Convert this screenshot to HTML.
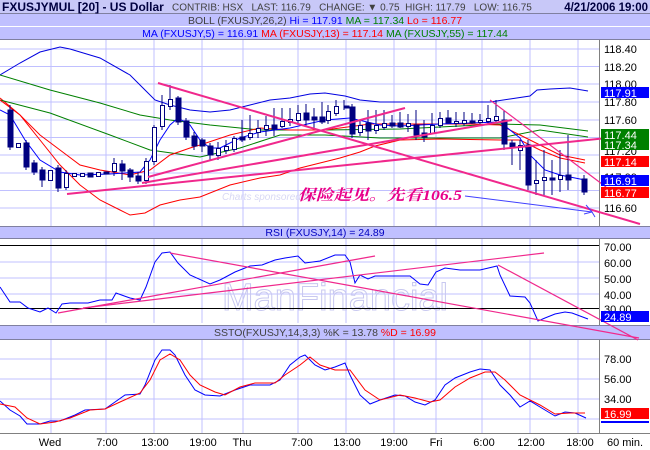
<!DOCTYPE html>
<html><head><meta charset="utf-8"><style>
html,body{margin:0;padding:0;background:#fff;width:650px;height:450px;overflow:hidden}
svg{display:block;font-family:"Liberation Sans",Arial,sans-serif}
</style></head><body>
<svg width="650" height="450" viewBox="0 0 650 450" xmlns="http://www.w3.org/2000/svg">
<rect width="650" height="450" fill="#fff"/>
<rect x="0" y="0" width="650" height="13" fill="#c8c8f8"/>
<rect x="0" y="14" width="650" height="12" fill="#c0c0ff"/>
<rect x="0" y="27" width="650" height="12" fill="#c0c0ff"/>
<line x1="0" y1="13.5" x2="650" y2="13.5" stroke="#8080a0"/>
<line x1="0" y1="26.5" x2="650" y2="26.5" stroke="#fff"/>
<line x1="0" y1="39.5" x2="650" y2="39.5" stroke="#8080a0"/>
<text x="2" y="11" font-size="12" font-weight="bold" fill="#000040">FXUSJYMUL [20] - US Dollar</text>
<text x="172" y="10.5" font-size="10" fill="#404040">CONTRIB: HSX&#160;&#160; LAST: 116.79&#160;&#160; CHANGE: &#9660; 0.75&#160; HIGH: 117.79&#160;&#160; LOW: 116.75</text>
<text x="648" y="11" font-size="11.5" font-weight="bold" fill="#000040" text-anchor="end">4/21/2006 19:00</text>
<text x="325" y="24" font-size="10.5" text-anchor="middle"><tspan fill="#404040">BOLL (FXUSJY,26,2) </tspan><tspan fill="#0000ff">Hi = 117.91 </tspan><tspan fill="#008000">MA = 117.34 </tspan><tspan fill="#ff0000">Lo = 116.77</tspan></text>
<text x="325" y="37" font-size="10.5" text-anchor="middle"><tspan fill="#0000ff">MA (FXUSJY,5) = 116.91 </tspan><tspan fill="#ff0000">MA (FXUSJY,13) = 117.14 </tspan><tspan fill="#008000">MA (FXUSJY,55) = 117.44</tspan></text>

<g stroke="#c0c0ff" stroke-width="1">
<path d="M51 40V226M106 40V226M154 40V226M202 40V226M243 40V226M298 40V226M346 40V226M394 40V226M436 40V226M482 40V226M530 40V226M578 40V226"/>
<path d="M0 49H599M0 66.5H599M0 84H599M0 102H599M0 120H599M0 137.5H599M0 155H599M0 173H599M0 190.5H599M0 208H599"/>
<path d="M51 239V323M106 239V323M154 239V323M202 239V323M243 239V323M298 239V323M346 239V323M394 239V323M436 239V323M482 239V323M530 239V323M578 239V323"/>
<path d="M0 262H599M0 278H599M0 294H599"/>
<path d="M51 340V433M106 340V433M154 340V433M202 340V433M243 340V433M298 340V433M346 340V433M394 340V433M436 340V433M482 340V433M530 340V433M578 340V433"/>
<path d="M0 359H599M0 379H599M0 399H599M0 419H599"/>
</g>
<line x1="599.5" y1="40" x2="599.5" y2="433" stroke="#808080"/>
<rect x="0" y="227" width="650" height="11" fill="#c0c0ff"/>
<line x1="0" y1="226.5" x2="650" y2="226.5" stroke="#8080a0"/>
<line x1="0" y1="238.5" x2="650" y2="238.5" stroke="#8080a0"/>
<text x="325" y="236" font-size="10.5" text-anchor="middle" fill="#0000c0">RSI (FXUSJY,14) = 24.89</text>
<rect x="0" y="326" width="650" height="13" fill="#c0c0ff"/>
<line x1="0" y1="325.5" x2="650" y2="325.5" stroke="#8080a0"/>
<line x1="0" y1="339.5" x2="650" y2="339.5" stroke="#8080a0"/>
<text x="325" y="336" font-size="10.5" text-anchor="middle"><tspan fill="#404040">SSTO(FXUSJY,14,3,3) %K = 13.78 </tspan><tspan fill="#ff0000">%D = 16.99</tspan></text>
<line x1="0" y1="433.5" x2="650" y2="433.5" stroke="#808080"/>

<text x="222" y="200" font-size="10" fill="#d8d8f4" font-style="italic">Charts sponsored by</text>
<text x="222" y="310" font-size="38" fill="none" stroke="#c8c8f0" stroke-width="1">ManFinancial</text>

<g fill="none" stroke-width="1">
<polyline stroke="#0000e0" points="0,75 20,63 40,52 60,47 70,49 100,58 130,75 145,90 155,100 170,105 190,110 210,112 230,110 250,105 270,100 290,98 310,94 325,93 345,96 360,100 380,102 400,102 440,102 490,102 510,99 530,96 537,90 550,89 570,88 588,91"/>
<polyline stroke="#ff0000" points="0,98 20,115 40,140 60,165 80,185 100,200 120,210 130,215 145,213 160,205 180,200 200,197 230,185 260,178 280,175 300,168 320,163 340,158 360,152 375,146 400,140 440,139 500,140 520,140 540,150 560,158 585,163"/>
<polyline stroke="#008000" points="0,75 50,90 100,103 140,115 170,120 210,125 260,130 325,130 400,129 500,124 540,125 588,131"/>
<polyline stroke="#008000" points="0,100 50,113 110,135 150,150 200,157 240,148 280,135 325,135 380,138 470,138 500,138 540,130 588,137"/>
<polyline stroke="#ff0000" points="0,100 20,115 40,135 60,150 80,165 100,170 130,175 150,170 170,155 190,148 200,145 230,135 260,128 290,130 325,130 370,124 420,124 470,124 500,125 520,135 540,145 560,155 585,160"/>
<polyline stroke="#0000ff" points="0,110 10,115 25,140 40,160 60,172 80,175 110,174 140,172 150,160 160,140 170,125 178,118 190,125 200,140 210,148 220,148 240,138 260,132 290,128 325,120 350,118 380,125 400,126 440,124 500,122 520,138 530,155 545,170 560,175 585,180"/>
</g>

<g stroke="#000080" stroke-width="1" fill="#000080">
<path d="M10 105V150M26 140V170M34 160V175M42 167V187M58 165V192M66 170V190M114 158V176M122 160V180M130 168V182M138 172V184M146 158V184M154 125V165M162 95V130M170 85V110M178 96V125M186 118V140M194 132V150M202 138V152M210 143V160M218 142V160M226 140V154M234 136V152M242 120V142M250 115V140M258 120V138M266 116V136M274 108V136M282 108V128M290 108V126M298 105V125M306 104V126M314 108V128M322 102V124M328 105V124M336 100V116M344 100V110M352 104V138M360 120V136M368 110V140M376 110V134M384 110V130M392 115V128M400 112V128M408 114V132M416 110V140M424 120V142M432 113V134M440 112V128M448 110V122M456 112V127M464 112V126M472 113V124M480 114V124M488 105V124M496 100V122M504 110V150M512 140V165M520 140V170M528 140V190M536 160V195M544 150V196M552 160V195M560 150V192M568 135V190M584 175V195"/>
<rect x="8" y="110" width="5" height="37"/><rect x="24" y="143" width="5" height="24"/><rect x="32" y="163" width="5" height="9"/><rect x="40" y="170" width="5" height="10"/><rect x="56" y="168" width="5" height="20"/><rect x="88" y="173" width="5" height="4"/><rect x="104" y="172" width="5" height="2"/><rect x="120" y="164" width="5" height="7"/><rect x="128" y="170" width="5" height="7"/><rect x="136" y="176" width="5" height="5"/>
<rect x="176" y="98" width="5" height="24"/><rect x="184" y="121" width="5" height="16"/><rect x="192" y="136" width="5" height="10"/><rect x="200" y="140" width="5" height="6"/><rect x="208" y="146" width="5" height="9"/><rect x="240" y="137" width="5" height="3"/><rect x="272" y="125" width="5" height="4"/><rect x="304" y="113" width="5" height="7"/><rect x="312" y="117" width="5" height="3"/><rect x="320" y="117" width="5" height="5"/>
<rect x="344" y="106" width="5" height="2"/><rect x="350" y="107" width="5" height="27"/><rect x="366" y="123" width="5" height="8"/><rect x="390" y="123" width="5" height="3"/><rect x="398" y="123" width="5" height="4"/><rect x="414" y="125" width="5" height="10"/><rect x="422" y="133" width="5" height="4"/><rect x="446" y="118" width="5" height="5"/><rect x="470" y="121" width="5" height="2"/><rect x="502" y="120" width="5" height="24"/><rect x="510" y="143" width="5" height="5"/><rect x="526" y="145" width="5" height="40"/><rect x="550" y="178" width="5" height="2"/><rect x="566" y="175" width="5" height="5"/><rect x="582" y="179" width="5" height="13"/>
</g>
<g stroke="#000080" stroke-width="1" fill="#fff">
<rect x="16.5" y="143.5" width="4" height="4"/><rect x="48.5" y="170.5" width="4" height="10"/><rect x="64.5" y="173.5" width="4" height="14"/><rect x="72.5" y="173.5" width="4" height="3"/><rect x="80.5" y="173.5" width="4" height="3"/><rect x="96.5" y="172.5" width="4" height="4"/><rect x="112.5" y="163.5" width="4" height="8"/><rect x="144.5" y="161.5" width="4" height="19"/><rect x="152.5" y="127.5" width="4" height="34"/><rect x="160.5" y="105.5" width="4" height="21"/><rect x="168.5" y="99.5" width="4" height="7"/><rect x="216.5" y="148.5" width="4" height="7"/><rect x="224.5" y="146.5" width="4" height="4"/><rect x="232.5" y="138.5" width="4" height="11"/><rect x="248.5" y="133.5" width="4" height="4"/><rect x="256.5" y="128.5" width="4" height="4"/><rect x="264.5" y="125.5" width="4" height="4"/><rect x="280.5" y="121.5" width="4" height="5"/><rect x="288.5" y="119.5" width="4" height="3"/><rect x="296.5" y="113.5" width="4" height="7"/>
<rect x="326.5" y="111.5" width="4" height="9"/><rect x="334.5" y="106.5" width="4" height="7"/><rect x="358.5" y="125.5" width="4" height="7"/><rect x="374.5" y="125.5" width="4" height="5"/><rect x="382.5" y="123.5" width="4" height="4"/><rect x="406.5" y="123.5" width="4" height="3"/><rect x="430.5" y="125.5" width="4" height="8"/><rect x="438.5" y="118.5" width="4" height="7"/><rect x="454.5" y="121.5" width="4" height="2"/><rect x="462.5" y="120.5" width="4" height="3"/><rect x="478.5" y="120.5" width="4" height="2"/><rect x="486.5" y="118.5" width="4" height="3"/><rect x="494.5" y="116.5" width="4" height="4"/><rect x="518.5" y="145.5" width="4" height="5"/><rect x="534.5" y="180.5" width="4" height="3"/><rect x="542.5" y="177.5" width="4" height="3"/><rect x="558.5" y="175.5" width="4" height="4"/>
</g>

<g stroke="#f0288c" stroke-width="2" fill="none">
<line x1="158" y1="83" x2="640" y2="224"/>
<line x1="67" y1="194" x2="607" y2="138"/>
<line x1="142" y1="183" x2="512" y2="120"/>
<line x1="148" y1="177" x2="405" y2="108"/>
</g>
<g stroke="#f0288c" stroke-width="1.2" fill="none">
<line x1="490" y1="100" x2="606" y2="187"/>
</g>
<g stroke="#4040ff" stroke-width="1" fill="none">
<line x1="465" y1="196" x2="592" y2="212"/>
<path d="M586 205L592 212L584 214M592 212L595 217"/>
</g>
<text x="298" y="200" font-size="15" font-style="italic" font-weight="bold" fill="#e8008a" font-family="'Liberation Serif','Noto Serif CJK SC',serif" textLength="164" lengthAdjust="spacingAndGlyphs">保险起见。先看106.5</text>

<g font-size="11" fill="#000">
<text x="604" y="53">118.40</text><text x="604" y="71">118.20</text><text x="604" y="88">118.00</text><text x="604" y="106">117.80</text><text x="604" y="124">117.60</text><text x="604" y="155">117.20</text><text x="604" y="181">117.00</text><text x="604" y="212">116.60</text>
</g>
<rect x="601" y="87" width="48" height="11" fill="#0000ff"/><text x="604" y="97" font-size="11" fill="#fff">117.91</text>
<rect x="601" y="129" width="48" height="11" fill="#008000"/><text x="604" y="139" font-size="11" fill="#fff">117.44</text>
<rect x="601" y="140" width="48" height="10" fill="#008000"/><text x="604" y="149" font-size="11" fill="#fff">117.34</text>
<rect x="601" y="156" width="48" height="11" fill="#ff0000"/><text x="604" y="166" font-size="11" fill="#fff">117.14</text>
<rect x="601" y="175" width="48" height="11" fill="#0000ff"/><text x="604" y="185" font-size="11" fill="#fff">116.91</text>
<rect x="601" y="187" width="48" height="11" fill="#ff0000"/><text x="604" y="197" font-size="11" fill="#fff">116.77</text>

<line x1="0" y1="245.5" x2="599" y2="245.5" stroke="#000"/>
<line x1="0" y1="308.5" x2="599" y2="308.5" stroke="#000"/>
<polyline fill="none" stroke="#0000ff" points="0,287 10,302 20,302 28,308 40,312 48,308 56,313 62,304 70,303 88,303 100,300 112,300 116,293 130,298 140,300 146,287 155,262 162,253 170,252 178,263 190,275 210,284 220,280 235,272 250,266 262,265 275,260 285,258 298,256 305,263 320,261 335,255 345,255 350,262 355,283 360,275 368,279 375,276 395,276 410,276 420,284 428,285 436,272 445,268 460,270 480,270 497,266 500,275 510,296 525,297 530,303 538,321 545,318 555,314 565,312 572,313 580,316 588,319"/>
<g stroke="#f0288c" stroke-width="1.2" fill="none">
<line x1="58" y1="313" x2="375" y2="256"/>
<line x1="170" y1="253" x2="639" y2="338"/>
<line x1="83" y1="308" x2="544" y2="253"/>
<line x1="498" y1="265" x2="638" y2="340"/>
</g>
<g font-size="11" fill="#000"><text x="604" y="251">70.00</text><text x="604" y="267">60.00</text><text x="604" y="283">50.00</text><text x="604" y="299">40.00</text><text x="604" y="313">30.00</text></g>
<rect x="601" y="311" width="48" height="11" fill="#0000ff"/><text x="604" y="321" font-size="11" fill="#fff">24.89</text>

<polyline fill="none" stroke="#0000ff" points="0,401 10,410 20,416 27,424 40,424 50,421 60,421 75,415 85,410 105,409 115,402 125,395 140,394 145,385 155,360 162,350 170,350 175,355 185,375 195,390 205,395 220,396 235,390 250,385 270,385 280,380 290,365 300,357 305,355 315,365 325,370 335,367 345,363 350,375 360,395 370,404 380,400 395,395 405,396 415,402 425,405 435,400 445,385 455,378 470,372 480,369 490,370 500,385 510,395 520,407 530,401 545,410 555,416 565,412 575,413 586,418"/>
<polyline fill="none" stroke="#ff0000" points="0,404 15,407 27,418 40,424 55,422 70,418 90,410 105,409 120,402 140,393 150,380 160,360 170,354 180,360 190,375 200,385 215,392 225,395 240,387 255,383 275,383 285,375 300,365 310,357 320,365 335,370 350,370 365,390 380,400 400,395 415,398 430,402 440,400 455,387 470,378 485,372 495,372 505,380 520,395 540,405 555,414 570,413 585,413"/>
<g font-size="11" fill="#000"><text x="604" y="363">78.00</text><text x="604" y="383">56.00</text><text x="604" y="403">34.00</text></g>
<rect x="601" y="408" width="48" height="11" fill="#ff0000"/><text x="604" y="418" font-size="11" fill="#fff">16.99</text>
<rect x="601" y="421" width="48" height="2" fill="#0000ff"/>

<g font-size="11" fill="#000" text-anchor="middle">
<text x="50" y="446">Wed</text><text x="107" y="446">7:00</text><text x="155" y="446">13:00</text><text x="203" y="446">19:00</text><text x="242" y="446">Thu</text><text x="302" y="446">7:00</text><text x="347" y="446">13:00</text><text x="394" y="446">19:00</text><text x="436" y="446">Fri</text><text x="484" y="446">6:00</text><text x="531" y="446">12:00</text><text x="580" y="446">18:00</text><text x="625" y="446">60 min.</text>
</g>
</svg>
</body></html>
